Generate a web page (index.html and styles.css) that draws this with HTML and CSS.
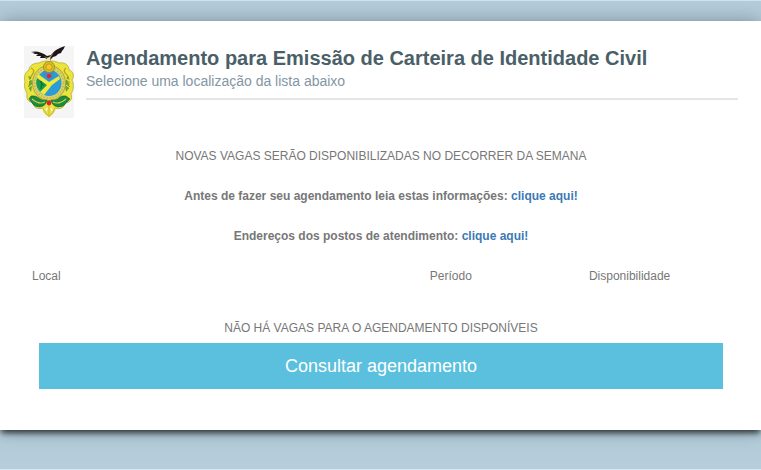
FILE: index.html
```html
<!DOCTYPE html>
<html lang="pt-BR">
<head>
    <meta charset="UTF-8">
    <meta name="viewport" content="width=device-width, initial-scale=1">
    <title>Agendamento para Emissão de Carteira de Identidade Civil</title>
    <link rel="stylesheet" href="styles.css">
</head>
<body>
    <main class="panel">
        <header class="header">
            <svg class="brasao" viewBox="0 0 50 72" role="img" aria-label="Brasão">
                <rect width="50" height="72" fill="#f5f5f5"/>
                <!-- ramos e moldura -->
                <path d="M15 17C9 17 5 20 5 24C0 27 0 32 1 36C-1 41 2 44 3 48C2 53 5 57 9 56C8 61 14 64 19 62L25 71L31 62C36 64 41 61 41 57C46 57 49 53 47 48C50 43 50 38 48 34C51 29 49 25 45 24C45 19 41 16 35 17C30 14 20 14 15 17Z" fill="#ece43a" stroke="#aaa534" stroke-width="0.7"/>
                <path d="M7 22Q12 24 8 29Q4 34 7 42M42 22Q38 25 43 29Q47 35 43 43" fill="none" stroke="#b5a51f" stroke-width="1.3"/>
                <path d="M4 30Q7 35 4 41L7 46Q9 38 7 31ZM45 30Q42 35 46 41L42 46Q40 38 43 31Z" fill="#6fa136"/>
                <path d="M5 28L7 26M4 35L8 33M4 42L8 39M45 28L43 26M46 35L42 33M46 42L42 39" stroke="#f6f04a" stroke-width="1"/>
                <!-- escudo -->
                <ellipse cx="25" cy="37" rx="16.5" ry="17.5" fill="#ddd55a" stroke="#9a9638" stroke-width="0.8"/>
                <ellipse cx="25" cy="37" rx="14.5" ry="15" fill="none" stroke="#bdb76c" stroke-width="1.5" stroke-dasharray="1.5 1.5"/>
                <ellipse cx="25" cy="37" rx="12.5" ry="13" fill="#2b9cd6"/>
                <path d="M15 29L25 38L19 47Q10 42 13 32Z" fill="#1c9a4c"/>
                <path d="M16 35L20 40M18 32L17 43" stroke="#0b6b38" stroke-width="1"/>
                <path d="M14 28L25 36L35 30L36 33L28 39L20 49L16 46L23 39L13 32Z" fill="#f1ea3c"/>
                <path d="M19 25H31L28 33L25 35L20 30Z" fill="#3b8fc9"/>
                <circle cx="25" cy="30" r="2.2" fill="#db263e"/>
                <!-- sol -->
                <circle cx="25" cy="21" r="5.5" fill="#dcc224" stroke="#8d8522" stroke-width="0.8"/>
                <circle cx="25" cy="21" r="3.2" fill="#efc92a" stroke="#b98a1c" stroke-width="0.8"/>
                <!-- folhas e ancora -->
                <path d="M7 50Q12 49 16 53Q19 55 23 54Q22 60 16 61Q10 61 8 57L5 53Z" fill="#1f8a3e" stroke="#146430" stroke-width="0.6"/>
                <path d="M42 50Q37 49 34 53Q31 55 27 54Q28 60 34 61Q40 61 42 57L46 53Z" fill="#1f8a3e" stroke="#146430" stroke-width="0.6"/>
                <path d="M8 53Q15 59 21 56M42 53Q35 59 29 56" fill="none" stroke="#c9d53e" stroke-width="1.2"/>
                <path d="M19 62L25 71L31 62L28 60H22Z" fill="#eee04a"/>
                <path d="M25 58V70M19 62Q20 67 25 70Q30 67 31 62" fill="none" stroke="#d8c52a" stroke-width="1.4"/>
                <path d="M22 65L23 62M28 65L27 62" stroke="#fffbd0" stroke-width="1.4"/>
                <circle cx="25" cy="57" r="2.4" fill="#df2429"/>
                <!-- aguia -->
                <path d="M7 6Q15 4 23 10L27 9Q31 3 41 0Q40 3 38 5L37 7L34 8L32 10L29 11L26 14H24L21 12L16 12L17 10L12 10L14 8L9 8L11 7Z" fill="#1d1719"/>
                <path d="M20 10L24 12L30 6L27 11L26 15L23 15L23 13Z" fill="#b88b42"/>
                <path d="M23 12L26 11L26 15H23Z" fill="#ede4be"/>
            </svg>
            <div class="header-text">
                <h1>Agendamento para Emissão de Carteira de Identidade Civil</h1>
                <p>Selecione uma localização da lista abaixo</p>
            </div>
        </header>

        <section class="notices">
            <p>NOVAS VAGAS SERÃO DISPONIBILIZADAS NO DECORRER DA SEMANA</p>
            <p class="strong">Antes de fazer seu agendamento leia estas informações: <a href="#">clique aqui!</a></p>
            <p class="strong">Endereços dos postos de atendimento: <a href="#">clique aqui!</a></p>
        </section>

        <table class="vagas">
            <thead>
                <tr>
                    <th class="local" scope="col">Local</th>
                    <th class="periodo" scope="col">Período</th>
                    <th class="disp" scope="col">Disponibilidade</th>
                </tr>
            </thead>
            <tbody>
                <tr>
                    <td class="empty" colspan="3">NÃO HÁ VAGAS PARA O AGENDAMENTO DISPONÍVEIS</td>
                </tr>
            </tbody>
        </table>

        <div class="actions">
            <button class="btn" type="button">Consultar agendamento</button>
        </div>
    </main>
</body>
</html>
```
FILE: styles.css
```css
* {
    box-sizing: border-box;
}
html {
    min-height: 100%;
    background: #b6cedb;
    border-top: 1px solid #cde4ef;
    border-bottom: 1px solid #d5e6ee;
}
body {
    margin: 0;
    padding: 20px 0 38px;
    color: #777;
    font-family: "Liberation Sans", Arial, sans-serif;
    font-size: 12px;
    line-height: 20px;
}
h1, p {
    margin: 0;
}
a {
    color: #3c78b4;
    text-decoration: none;
}
a:hover {
    text-decoration: underline;
}
.panel {
    padding: 25px 23px 41px 24px;
    background: #fff;
    box-shadow: 0 4px 6px -1px rgba(0, 0, 0, 0.7), 0 0 20px rgba(70, 90, 100, 0.5);
}
.header {
    display: flex;
    gap: 12px;
}
.brasao {
    flex: none;
    width: 50px;
    height: 72px;
}
.header-text {
    flex: 1;
    align-self: flex-start;
    padding-bottom: 6px;
    border-bottom: 2px solid #e5e5e5;
}
.header-text h1 {
    color: #4a5f68;
    font-size: 20px;
    line-height: 24px;
}
.header-text p {
    color: #8496a3;
    font-size: 14px;
    line-height: 22px;
}
.notices {
    display: flex;
    flex-direction: column;
    gap: 20px;
    padding-top: 28px;
    text-align: center;
}
.strong {
    font-weight: bold;
}
.vagas {
    width: 100%;
    margin-top: 12px;
    border-collapse: collapse;
    table-layout: fixed;
}
.vagas th {
    padding: 8px;
    font-weight: normal;
    text-align: left;
}
.vagas .local {
    width: 56%;
}
.vagas .periodo {
    width: 22%;
}
.vagas .disp {
    width: 22%;
}
.vagas .periodo {
    padding-left: 6px;
}
.vagas .empty {
    padding: 24px 8px 5px;
    text-align: center;
}
.actions {
    padding: 0 15px;
}
.btn {
    display: block;
    width: 100%;
    padding: 11px 16px;
    border: none;
    background: #5bbfde;
    color: #fff;
    font-family: inherit;
    font-size: 18px;
    line-height: 24px;
    cursor: pointer;
}
.btn:hover {
    background: #46b4d6;
}
```
